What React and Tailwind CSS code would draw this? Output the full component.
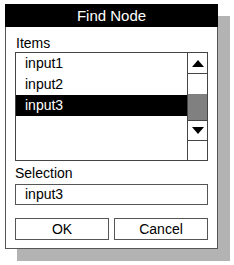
import React from "react";

const rows = ["input1", "input2", "input3"];

const App = () => {
  return (
    <div
      className="w-[234px] h-[265px] bg-white pl-[5px] pt-[4px]"
      style={{ fontFamily: "'Liberation Sans', Arial, sans-serif" }}
    >
      <div className="w-[213px] h-[245px] border border-[#555] bg-white shadow-[12px_12px_0_#b3b3b3] flex flex-col">
        <div className="h-[23px] bg-black text-white text-[15px] leading-[23px] text-center -mx-px -mt-px">
          Find Node
        </div>

        <div className="flex flex-col px-[9px]">
          <div className="mt-[8px] pl-[1px] text-[14px] leading-[16px] text-black">Items</div>

          <div className="mt-[1px] h-[109px] border border-[#444] flex">
            <div className="flex-1 flex flex-col">
              {rows.map((r, i) => (
                <div
                  key={r}
                  className={
                    i === 2
                      ? "h-[21px] leading-[21px] pl-[9px] text-[14px] bg-black text-white"
                      : "h-[21px] leading-[21px] pl-[9px] text-[14px] text-black"
                  }
                >
                  {r}
                </div>
              ))}
            </div>

            <div className="w-[20px] border-l border-[#444] flex flex-col">
              <div className="h-[21px] border-b border-[#444] flex items-center justify-center">
                <svg width="12" height="7" viewBox="0 0 12 7">
                  <polygon points="6,0 12,7 0,7" fill="#000" />
                </svg>
              </div>
              <div className="h-[20px]" />
              <div className="h-[26px] bg-[#808080]" />
              <div className="h-[21px] border-y border-[#444] flex items-center justify-center">
                <svg width="12" height="7" viewBox="0 0 12 7">
                  <polygon points="0,0 12,0 6,7" fill="#000" />
                </svg>
              </div>
              <div className="flex-1" />
            </div>
          </div>

          <div className="mt-[4px] text-[14px] leading-[16px] text-black">Selection</div>

          <div className="mt-[3px] h-[21px] border border-[#555] pl-[9px] text-[14px] leading-[19px] text-black">
            input3
          </div>

          <div className="mt-[13px] flex gap-[5px]">
            <div className="flex-1 h-[22px] border border-[#555] text-center text-[14px] leading-[20px] text-black">
              OK
            </div>
            <div className="flex-1 h-[22px] border border-[#555] text-center text-[14px] leading-[20px] text-black">
              Cancel
            </div>
          </div>
        </div>
      </div>
    </div>
  );
};

export default App;
